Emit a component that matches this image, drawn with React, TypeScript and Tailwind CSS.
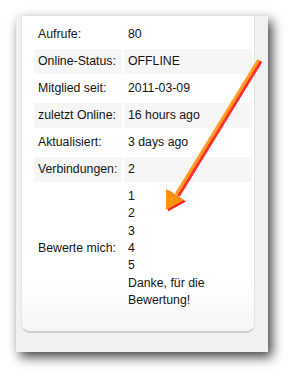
import React from "react";

const rows: [string, string][] = [
  ["Aufrufe:", "80"],
  ["Online-Status:", "OFFLINE"],
  ["Mitglied seit:", "2011-03-09"],
  ["zuletzt Online:", "16 hours ago"],
  ["Aktualisiert:", "3 days ago"],
  ["Verbindungen:", "2"],
];

function Arrow() {
  return (
    <svg
      className="absolute left-0 top-0 pointer-events-none"
      width="293"
      height="376"
      viewBox="0 0 293 376"
    >
      <defs>
        <filter id="blur" x="-20%" y="-20%" width="140%" height="140%">
          <feGaussianBlur stdDeviation="0.6" />
        </filter>
      </defs>
      <g transform="translate(2 1.5)" filter="url(#blur)">
        <line x1="258" y1="61" x2="177" y2="193" stroke="#ff2e2e" strokeWidth="3.5" strokeLinecap="round" />
        <polygon points="166,210 167,189 184,200" fill="#ff2020" />
      </g>
      <line x1="258" y1="61" x2="177" y2="193" stroke="#ff9818" strokeWidth="3.2" strokeLinecap="round" />
      <line x1="257" y1="62" x2="178" y2="191" stroke="#ffb347" strokeWidth="1" strokeLinecap="round" opacity="0.5" />
      <polygon points="166,210 166,189 184,200" fill="#ff920c" />
    </svg>
  );
}

export default function App() {
  return (
    <div
      className="relative w-[293px] h-[376px] bg-white overflow-hidden pl-4 pt-4"
      style={{ fontFamily: '"Liberation Sans", Arial, sans-serif' }}
    >
      <div className="w-[252px] h-[336px] bg-[#f1f1f1] shadow-[4px_5px_11px_rgba(0,0,0,0.75)]">
        <div className="ml-[5px] w-[234px] h-[317px] bg-gradient-to-b from-white from-85% to-[#f6f6f6] rounded-b-[9px] border-x border-b-2 border-x-[#e4e4e4] border-b-[#cdcdcd] pl-[10px] pt-[4px]">
          <table className="border-separate border-spacing-[2px] text-[12.3px] text-[#151515]">
            <tbody>
              {rows.map(([k, v], i) => (
                <tr key={k} className={i % 2 === 1 ? "bg-[#f6f6f6]" : ""}>
                  <td className="w-[88px] h-[25px] px-[4px] leading-[17px] whitespace-nowrap align-middle">{k}</td>
                  <td className="w-[128px] h-[25px] px-[4px] leading-[17px] align-middle">{v}</td>
                </tr>
              ))}
              <tr>
                <td className="w-[88px] px-[4px] leading-[17px] whitespace-nowrap align-middle">Bewerte mich:</td>
                <td className="w-[128px] px-[4px] py-[4px] leading-[17.33px] align-middle">
                  <div>1</div>
                  <div>2</div>
                  <div>3</div>
                  <div>4</div>
                  <div>5</div>
                  <div>Danke, für die</div>
                  <div>Bewertung!</div>
                </td>
              </tr>
            </tbody>
          </table>
        </div>
      </div>
      <Arrow />
    </div>
  );
}
